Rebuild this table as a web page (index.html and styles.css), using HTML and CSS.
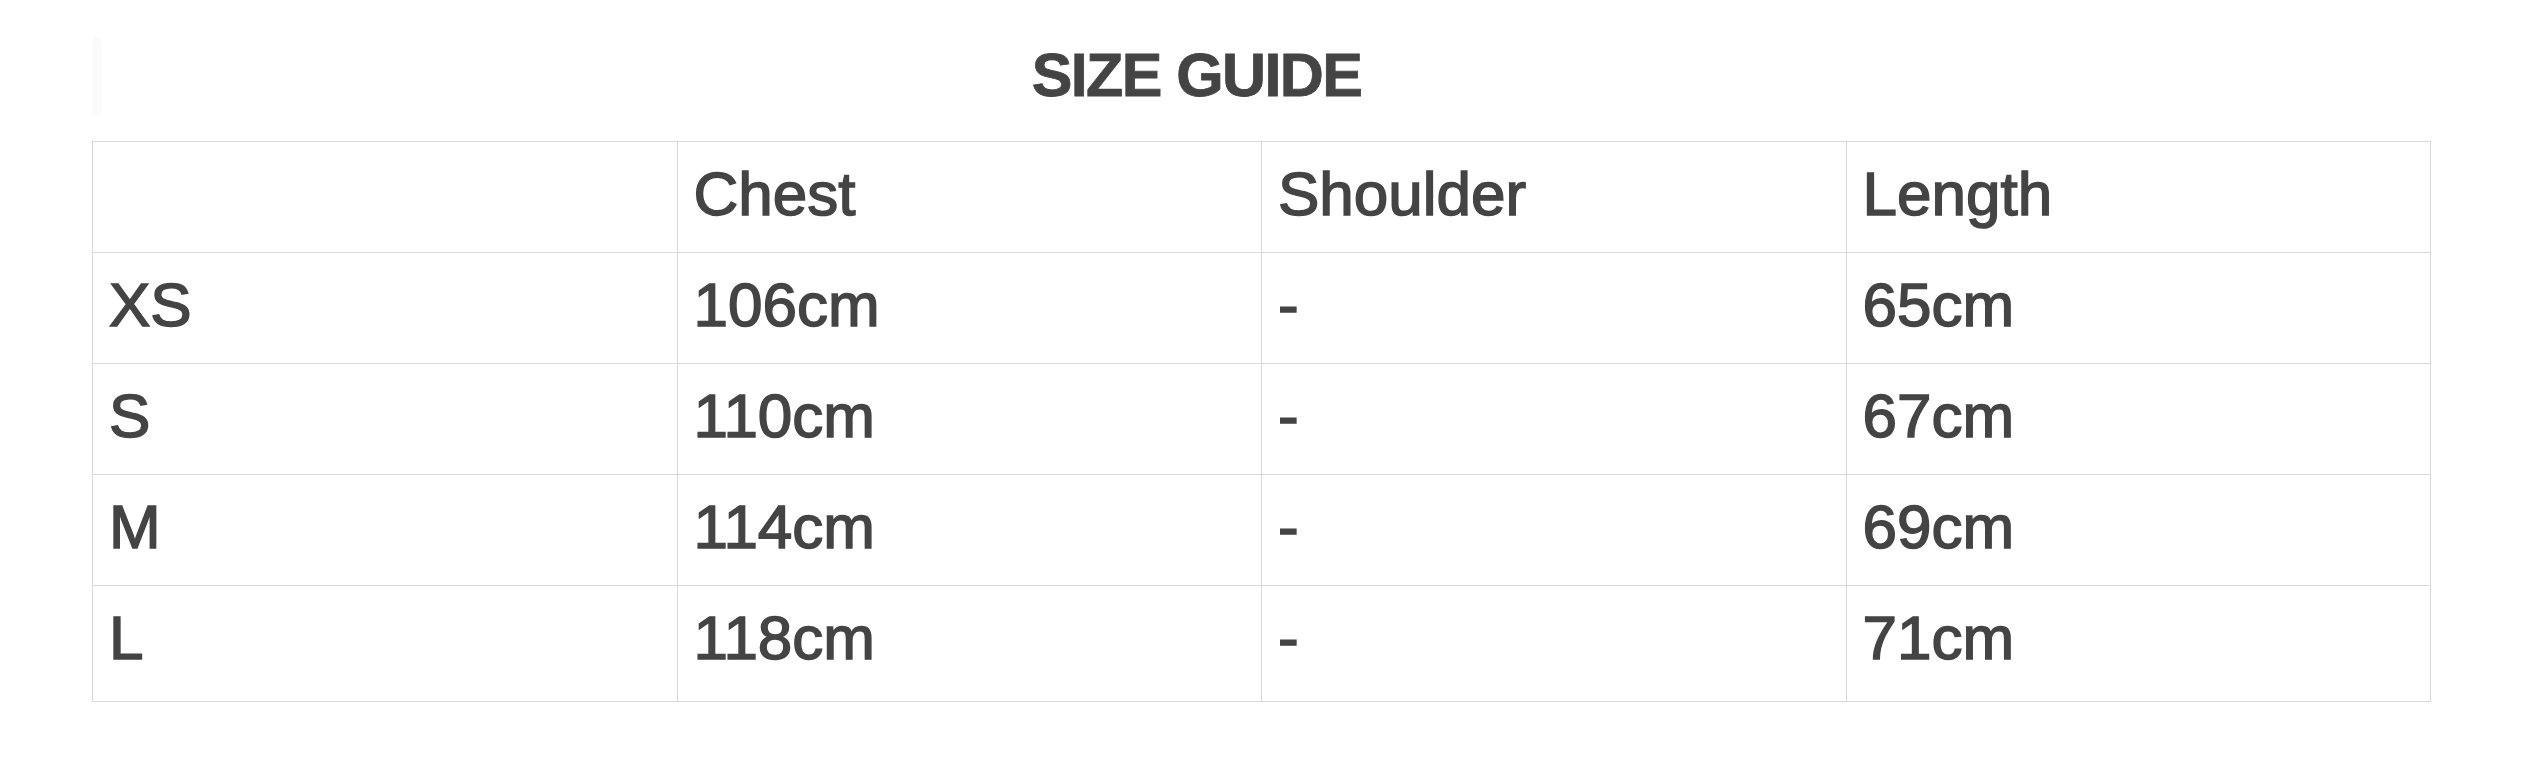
FILE: index.html
```html
<!DOCTYPE html>
<html lang="en">
<head>
<meta charset="utf-8">
<title>Size Guide</title>
<link rel="stylesheet" href="styles.css">
</head>
<body>
<div class="page">
  <div class="heading-row">
    <span class="scroll-hint"></span>
    <h1 class="title">SIZE GUIDE</h1>
  </div>
  <table class="size-table">
    <thead>
      <tr><th></th><th>Chest</th><th>Shoulder</th><th>Length</th></tr>
    </thead>
    <tbody>
      <tr><td>XS</td><td>106cm</td><td>-</td><td>65cm</td></tr>
      <tr><td>S</td><td>110cm</td><td>-</td><td>67cm</td></tr>
      <tr><td>M</td><td>114cm</td><td>-</td><td>69cm</td></tr>
      <tr><td>L</td><td>118cm</td><td>-</td><td>71cm</td></tr>
    </tbody>
  </table>
</div>
</body>
</html>
```
FILE: styles.css
```css
html, body {
  margin: 0;
  padding: 0;
  background: #ffffff;
}

body {
  font-family: "Liberation Sans", Arial, Helvetica, sans-serif;
  color: #444444;
}

.page {
  padding: 37px 91px 0 92px;
}

.heading-row {
  display: flex;
  align-items: flex-start;
  padding-right: 140px;
}

.scroll-hint {
  width: 10px;
  height: 80px;
  border-radius: 5px;
  background: #fbfbfb;
  flex: none;
}

.title {
  flex: 1;
  margin: 3px 0 0;
  text-align: center;
  font-size: 61px;
  line-height: 70px;
  font-weight: 700;
  letter-spacing: -1.6px;
  color: #444444;
  -webkit-text-stroke: 0.8px #444444;
}

.size-table {
  margin-top: 24px;
  width: 100%;
  border-collapse: collapse;
  table-layout: fixed;
}

.size-table th,
.size-table td {
  border: 1px solid #d9d9d9;
  padding: 15px 15px 21px 16px;
  font-size: 62px;
  line-height: 74px;
  font-weight: 400;
  text-align: left;
  color: #444444;
  -webkit-text-stroke: 1.5px #444444;
}

.size-table tbody tr:last-child td {
  padding-bottom: 26px;
}
```
